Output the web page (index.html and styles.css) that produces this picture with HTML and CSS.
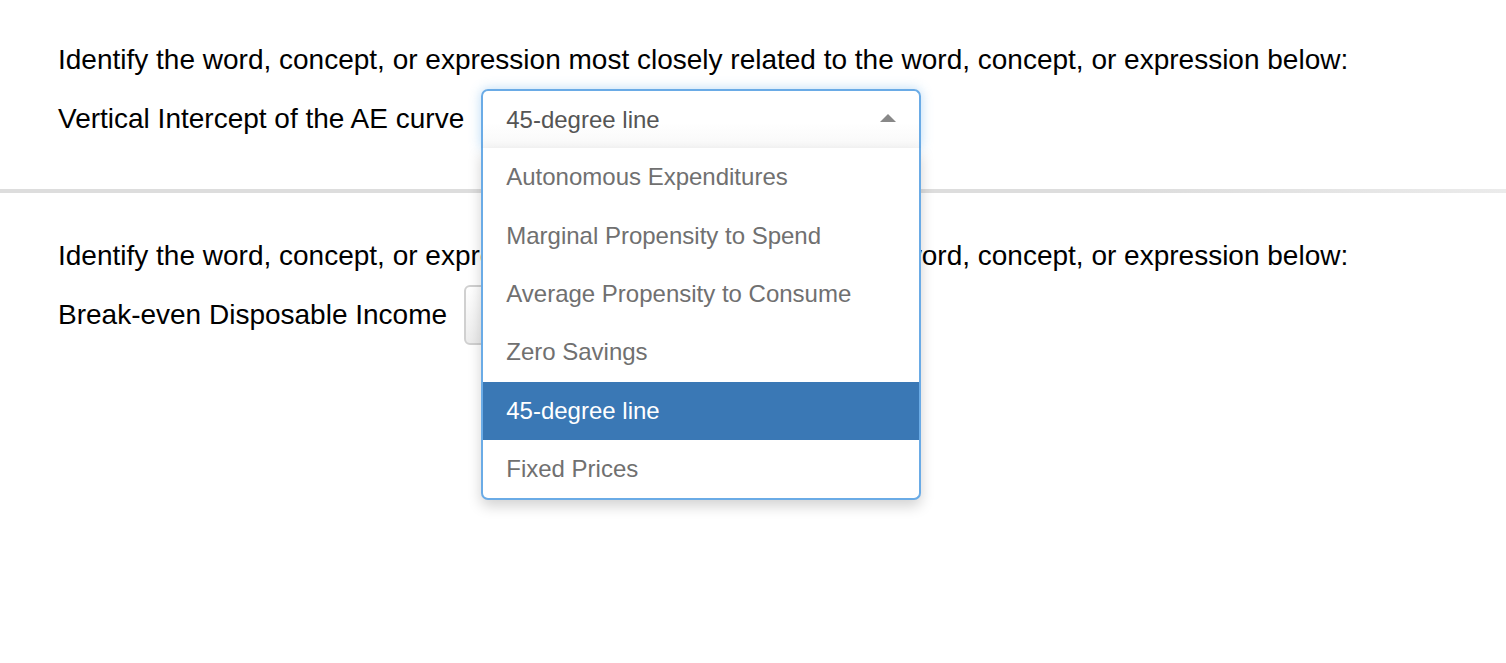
FILE: index.html
```html
<!DOCTYPE html>
<html lang="en">
<head>
<meta charset="utf-8">
<title>Related concepts</title>
<link rel="stylesheet" href="styles.css">
</head>
<body>
  <section class="question first">
    <p class="prompt">Identify the word, concept, or expression most closely related to the word, concept, or expression below:</p>
    <div class="row">
      <span class="term">Vertical Intercept of the AE curve</span>
      <div class="select open">
        <span class="value">45-degree line</span>
        <span class="arrow up"></span>
        <ul class="dropdown">
          <li class="option">Autonomous Expenditures</li>
          <li class="option">Marginal Propensity to Spend</li>
          <li class="option">Average Propensity to Consume</li>
          <li class="option">Zero Savings</li>
          <li class="option active">45-degree line</li>
          <li class="option">Fixed Prices</li>
        </ul>
      </div>
    </div>
  </section>
  <div class="divider"></div>
  <section class="question second">
    <p class="prompt">Identify the word, concept, or expression most closely related to the word, concept, or expression below:</p>
    <div class="row">
      <span class="term">Break-even Disposable Income</span>
      <div class="select">
        <span class="value"></span>
        <span class="arrow"></span>
      </div>
    </div>
  </section>
</body>
</html>
```

FILE: styles.css
```css
html {
  height: 100%;
}

body {
  margin: 0;
  min-height: 100%;
  font-family: "Liberation Sans", Arial, sans-serif;
  color: #000;
  background: #fff;
}

.question {
  padding: 41px 58px 41px;
}

.question.second {
  padding-top: 44px;
}

.prompt {
  margin: 0 0 10px;
  font-size: 28px;
  line-height: 38px;
}

.row {
  display: flex;
  align-items: center;
  gap: 17px;
  font-size: 28px;
}

.select {
  position: relative;
  box-sizing: border-box;
  width: 440px;
  height: 60px;
  padding: 0 23px;
  display: flex;
  align-items: center;
  border: 2px solid #d0d0d0;
  border-radius: 6px;
  background: linear-gradient(#ffffff, #ececec);
  font-size: 24px;
  color: #555;
}

.select.open {
  height: 59px;
  border-color: #6aabe6;
  border-bottom: 0;
  border-radius: 7px 7px 0 0;
  background: linear-gradient(#ffffff 0%, #ffffff 55%, #f8f8f8 100%);
  box-shadow: 0 0 12px rgba(102, 175, 233, 0.45);
}

.value {
  flex: 1;
}

.arrow {
  width: 0;
  height: 0;
  border-left: 8px solid transparent;
  border-right: 8px solid transparent;
  border-top: 8px solid #888;
}

.arrow.up {
  border-top: 0;
  border-bottom: 8px solid #888;
  margin-top: -4px;
}

.dropdown {
  position: absolute;
  top: 100%;
  left: -2px;
  z-index: 10;
  box-sizing: border-box;
  width: 440px;
  margin: 0;
  padding: 0;
  list-style: none;
  background: #fff;
  border: 2px solid #6aabe6;
  border-top: 0;
  border-radius: 0 0 7px 7px;
  box-shadow: 0 6px 14px rgba(0, 0, 0, 0.18);
  overflow: hidden;
}

.option {
  height: 58.4px;
  padding: 0 23px;
  display: flex;
  align-items: center;
  color: #707070;
}

.option.active {
  background: #3a78b5;
  color: #fff;
}

.divider {
  height: 4px;
  background: linear-gradient(to right, #dddddd 0%, #dddddd 75%, #ebebeb 100%);
}
```
